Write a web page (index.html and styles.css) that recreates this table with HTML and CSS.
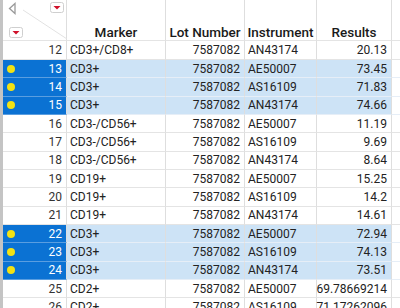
FILE: index.html
```html
<!DOCTYPE html>
<html lang="en">
<head>
    <meta charset="UTF-8">
    <title>Data Table</title>
    <link rel="stylesheet" href="styles.css">
</head>
<body>
    <div class="sheet">
        <div class="row head">
            <div class="cell corner">
                <svg width="64" height="40" viewBox="0 0 64 40">
                    <line x1="20" y1="10" x2="64" y2="39" stroke="#e2e2e2" stroke-width="1"/>
                    <polygon points="12,3.5 6.5,8.5 12,13.5" fill="none" stroke="#9a9a9a" stroke-width="1.3"/>
                    <rect x="47.5" y="2.5" width="13" height="10" rx="2" fill="#fff" stroke="#cfcfcf"/>
                    <polygon points="50.5,6 57.5,6 54,9.5" fill="#d0112b"/>
                    <rect x="6.5" y="27.5" width="13" height="10" rx="2" fill="#fff" stroke="#cfcfcf"/>
                    <polygon points="9.5,31 16.5,31 13,34.5" fill="#d0112b"/>
                </svg>
            </div>
            <div class="cell">Marker</div>
            <div class="cell">Lot Number</div>
            <div class="cell">Instrument</div>
            <div class="cell">Results</div>
            <div class="cell filler"></div>
        </div>

        <div class="row first">
            <div class="cell num rowhead">12</div>
            <div class="cell">CD3+/CD8+</div>
            <div class="cell num">7587082</div>
            <div class="cell">AN43174</div>
            <div class="cell num">20.13</div>
            <div class="cell filler"></div>
        </div>
        <div class="row selected">
            <div class="cell num rowhead"><span class="dot"></span>13</div>
            <div class="cell">CD3+</div>
            <div class="cell num">7587082</div>
            <div class="cell">AE50007</div>
            <div class="cell num">73.45</div>
            <div class="cell filler"></div>
        </div>
        <div class="row selected">
            <div class="cell num rowhead"><span class="dot"></span>14</div>
            <div class="cell">CD3+</div>
            <div class="cell num">7587082</div>
            <div class="cell">AS16109</div>
            <div class="cell num">71.83</div>
            <div class="cell filler"></div>
        </div>
        <div class="row selected">
            <div class="cell num rowhead"><span class="dot"></span>15</div>
            <div class="cell">CD3+</div>
            <div class="cell num">7587082</div>
            <div class="cell">AN43174</div>
            <div class="cell num">74.66</div>
            <div class="cell filler"></div>
        </div>
        <div class="row">
            <div class="cell num rowhead">16</div>
            <div class="cell">CD3-/CD56+</div>
            <div class="cell num">7587082</div>
            <div class="cell">AE50007</div>
            <div class="cell num">11.19</div>
            <div class="cell filler"></div>
        </div>
        <div class="row">
            <div class="cell num rowhead">17</div>
            <div class="cell">CD3-/CD56+</div>
            <div class="cell num">7587082</div>
            <div class="cell">AS16109</div>
            <div class="cell num">9.69</div>
            <div class="cell filler"></div>
        </div>
        <div class="row">
            <div class="cell num rowhead">18</div>
            <div class="cell">CD3-/CD56+</div>
            <div class="cell num">7587082</div>
            <div class="cell">AN43174</div>
            <div class="cell num">8.64</div>
            <div class="cell filler"></div>
        </div>
        <div class="row">
            <div class="cell num rowhead">19</div>
            <div class="cell">CD19+</div>
            <div class="cell num">7587082</div>
            <div class="cell">AE50007</div>
            <div class="cell num">15.25</div>
            <div class="cell filler"></div>
        </div>
        <div class="row">
            <div class="cell num rowhead">20</div>
            <div class="cell">CD19+</div>
            <div class="cell num">7587082</div>
            <div class="cell">AS16109</div>
            <div class="cell num">14.2</div>
            <div class="cell filler"></div>
        </div>
        <div class="row">
            <div class="cell num rowhead">21</div>
            <div class="cell">CD19+</div>
            <div class="cell num">7587082</div>
            <div class="cell">AN43174</div>
            <div class="cell num">14.61</div>
            <div class="cell filler"></div>
        </div>
        <div class="row selected">
            <div class="cell num rowhead"><span class="dot"></span>22</div>
            <div class="cell">CD3+</div>
            <div class="cell num">7587082</div>
            <div class="cell">AE50007</div>
            <div class="cell num">72.94</div>
            <div class="cell filler"></div>
        </div>
        <div class="row selected">
            <div class="cell num rowhead"><span class="dot"></span>23</div>
            <div class="cell">CD3+</div>
            <div class="cell num">7587082</div>
            <div class="cell">AS16109</div>
            <div class="cell num">74.13</div>
            <div class="cell filler"></div>
        </div>
        <div class="row selected">
            <div class="cell num rowhead"><span class="dot"></span>24</div>
            <div class="cell">CD3+</div>
            <div class="cell num">7587082</div>
            <div class="cell">AN43174</div>
            <div class="cell num">73.51</div>
            <div class="cell filler"></div>
        </div>
        <div class="row">
            <div class="cell num rowhead">25</div>
            <div class="cell">CD2+</div>
            <div class="cell num">7587082</div>
            <div class="cell">AE50007</div>
            <div class="cell num">69.78669214</div>
            <div class="cell filler"></div>
        </div>
        <div class="row">
            <div class="cell num rowhead">26</div>
            <div class="cell">CD2+</div>
            <div class="cell num">7587082</div>
            <div class="cell">AS16109</div>
            <div class="cell num">71.17262096</div>
            <div class="cell filler"></div>
        </div>
    </div>
</body>
</html>
```

FILE: styles.css
```css
body {
    margin: 0;
    font-family: Roboto, "Liberation Sans", sans-serif;
    font-size: 12px;
    color: #222;
    background: #fff;
}
.sheet {
    height: 308px;
    overflow: hidden;
    border-left: 3px solid #c4c4c4;
}
.row {
    display: grid;
    grid-template-columns: 64px 99px 79px 72px 75px 1fr;
    height: 18.33px;
}
.row.first {
    height: 19px;
}
.cell {
    box-sizing: border-box;
    display: flex;
    align-items: center;
    padding: 0 4px 0 3px;
    border-right: 1px solid #dedede;
    border-bottom: 1px solid #e4e4e4;
    white-space: nowrap;
}
.num {
    justify-content: flex-end;
    padding-left: 0;
}
.filler {
    border-right: none;
}
.head {
    height: 41px;
}
.head .cell {
    align-items: flex-end;
    justify-content: center;
    padding: 0;
    font-size: 13.5px;
    font-weight: 500;
    color: #1a1a1a;
}
.head .corner {
    padding: 0;
    position: relative;
}
.corner svg {
    position: absolute;
    left: 0;
    top: 0;
}
.rowhead {
    position: relative;
    color: #333;
}
.selected .cell {
    background: #cde3f6;
    border-bottom-color: #e6eef7;
}
.selected .rowhead {
    background: #0b72d3;
    color: #fff;
    border-bottom-color: #5a9ee0;
}
.selected .filler {
    background: #fff;
}
.dot {
    position: absolute;
    left: 4px;
    top: 50%;
    width: 8px;
    height: 8px;
    margin-top: -4px;
    border-radius: 50%;
    background: #f2e214;
}
```
